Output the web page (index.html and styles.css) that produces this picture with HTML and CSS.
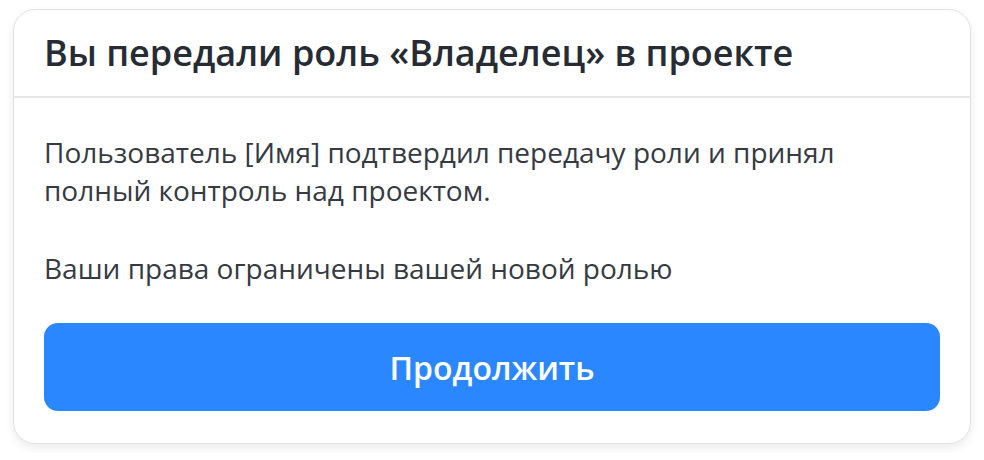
FILE: index.html
```html
<!DOCTYPE html>
<html lang="ru">
<head>
    <meta charset="UTF-8">
    <meta name="viewport" content="width=device-width, initial-scale=1.0">
    <title>Передача роли</title>
    <link rel="stylesheet" href="styles.css">
</head>
<body>
    <div class="modal">
        <div class="modal-header">
            <h1>Вы передали роль «Владелец» в проекте</h1>
        </div>
        <div class="modal-body">
            <p>Пользователь [Имя] подтвердил передачу роли и принял полный контроль над проектом.</p>
            <p>Ваши права ограничены вашей новой ролью</p>
            <button type="button" class="btn-primary">Продолжить</button>
        </div>
    </div>
</body>
</html>
```

FILE: styles.css
```css
body {
    font-family: "Open Sans", Arial, sans-serif;
    background-color: #ffffff;
    margin: 0;
    padding: 9px 13px;
}

.modal {
    width: 958px;
    box-sizing: border-box;
    background-color: #fff;
    border: 1px solid #e3e3e3;
    border-radius: 22px;
    box-shadow: 0 4px 10px rgba(0, 0, 0, 0.08);
}

.modal-header {
    padding: 18px 30px 19px;
    border-bottom: 2px solid #e6e6e6;
}

h1 {
    margin: 0;
    font-size: 36px;
    line-height: 49px;
    font-weight: 600;
    color: #272b33;
}

.modal-body {
    padding: 35px 30px 32px;
}

p {
    margin: 0 0 40px;
    font-size: 28px;
    line-height: 38px;
    color: #363a42;
}

p:last-of-type {
    margin-bottom: 36px;
}

.btn-primary {
    display: block;
    width: 100%;
    height: 88px;
    border: none;
    border-radius: 14px;
    background-color: #2b87ff;
    color: #fff;
    font-family: inherit;
    font-size: 32px;
    font-weight: 600;
    cursor: pointer;
}
```
